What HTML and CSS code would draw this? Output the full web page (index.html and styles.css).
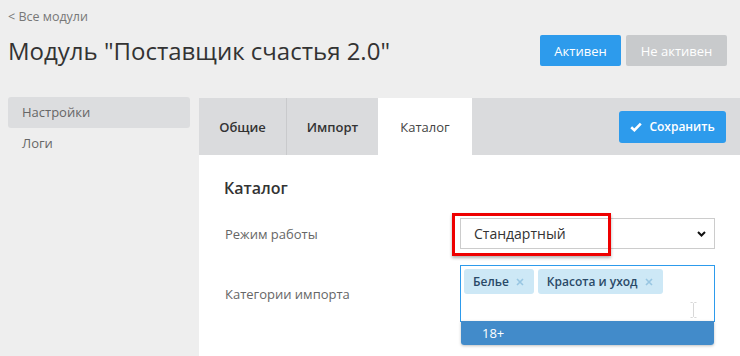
FILE: index.html
```html
<!DOCTYPE html>
<html lang="ru">
<head>
<meta charset="utf-8">
<title>Модуль</title>
<link rel="stylesheet" href="styles.css">
</head>
<body>
<div class="page">
  <div class="top">
    <a class="back" href="#">&lt; Все модули</a>
    <div class="title-row">
      <h1 class="title">Модуль "Поставщик счастья 2.0"</h1>
      <div class="status">
        <button class="btn btn-active">Активен</button>
        <button class="btn btn-inactive">Не активен</button>
      </div>
    </div>
  </div>
  <div class="body-row">
    <nav class="sidebar">
      <a class="side-item side-item-active" href="#">Настройки</a>
      <a class="side-item" href="#">Логи</a>
    </nav>
    <main class="panel">
      <div class="tabbar">
        <div class="tabs">
          <div class="tab tab-sep">Общие</div>
          <div class="tab">Импорт</div>
          <div class="tab tab-current">Каталог</div>
        </div>
        <button class="btn-save">
          <svg class="check" width="12" height="10" viewBox="0 0 12 10"><path d="M1.2 5.2 L4.4 8.2 L10.8 1.6" fill="none" stroke="#fff" stroke-width="2.6" stroke-linejoin="miter"/></svg>
          Сохранить
        </button>
      </div>
      <div class="content">
        <h2 class="section-title">Каталог</h2>
        <div class="form-row row-mode">
          <label class="label">Режим работы</label>
          <div class="field">
            <div class="select">
              <span>Стандартный</span>
              <svg class="chev" width="9" height="6" viewBox="0 0 9 6"><path d="M1 1 L4.5 4.5 L8 1" fill="none" stroke="#111" stroke-width="2"/></svg>
            </div>
            <div class="highlight"></div>
          </div>
        </div>
        <div class="form-row row-cats">
          <label class="label">Категории импорта</label>
          <div class="field">
            <div class="multi">
              <span class="tag">Белье <svg class="x" width="8" height="8" viewBox="0 0 8 8"><path d="M1 1 L7 7 M7 1 L1 7" stroke="#98c6e2" stroke-width="1.6"/></svg></span>
              <span class="tag">Красота и уход <svg class="x" width="8" height="8" viewBox="0 0 8 8"><path d="M1 1 L7 7 M7 1 L1 7" stroke="#98c6e2" stroke-width="1.6"/></svg></span>
              <svg class="ibeam" width="7" height="16" viewBox="0 0 7 16"><path d="M0.5 0.5 H2.5 L3.5 1.5 L4.5 0.5 H6.5 M3.5 1.5 V14.5 M0.5 15.5 H2.5 L3.5 14.5 L4.5 15.5 H6.5" fill="none" stroke="#d8d8d8" stroke-width="1"/></svg>
            </div>
            <div class="dropdown">
              <div class="option option-hl">18+</div>
            </div>
          </div>
        </div>
      </div>
    </main>
  </div>
</div>
</body>
</html>
```

FILE: styles.css
```css
* { box-sizing: border-box; }
html, body { margin: 0; padding: 0; }
body {
  background: #eeeeee;
  font-family: "Open Sans", "Liberation Sans", sans-serif;
  color: #333;
  width: 740px;
  height: 356px;
  overflow: hidden;
}
.page { padding: 8px 0 0 8px; }
.top { padding-right: 13px; }
.back {
  display: block;
  font-size: 12.5px;
  line-height: 18px;
  color: #777;
  text-decoration: none;
}
.title-row {
  margin-top: 9px;
  display: flex;
  align-items: center;
  justify-content: space-between;
  height: 31px;
}
.title {
  margin: 0;
  font-size: 24px;
  font-weight: 400;
  line-height: 31px;
  color: #333;
}
.status { display: flex; gap: 5px; }
.btn {
  height: 31px;
  border: 0;
  border-radius: 2px;
  font-family: inherit;
  font-size: 13px;
  color: #fff;
  padding: 0;
  white-space: nowrap;
}
.btn-active { background: #2d9bec; width: 81px; }
.btn-inactive { background: #c8cacc; width: 101px; }

.body-row {
  display: flex;
  margin-top: 31px;
  gap: 9px;
}
.sidebar {
  width: 182px;
  flex: none;
  display: flex;
  flex-direction: column;
}
.side-item {
  display: block;
  height: 31px;
  line-height: 31px;
  padding-left: 14px;
  font-size: 13px;
  color: #666;
  text-decoration: none;
  border-radius: 3px;
}
.side-item-active { background: #dcdddf; }

.panel {
  flex: 1;
  margin-top: 1px;
  background: #fff;
  min-height: 260px;
}
.tabbar {
  height: 57px;
  background: #dadbdd;
  display: flex;
  align-items: center;
  justify-content: space-between;
  padding-right: 14px;
}
.tabs { display: flex; height: 100%; }
.tab {
  height: 100%;
  display: flex;
  align-items: center;
  justify-content: center;
  font-size: 13px;
  font-weight: 600;
  color: #333;
}
.tabs .tab:nth-child(1) { width: 88px; }
.tabs .tab:nth-child(2) { width: 91px; }
.tab-sep { border-right: 1px solid #c9cacc; }
.tab-current {
  width: 94px;
  background: #fff;
  font-weight: 400;
  color: #444;
}
.btn-save {
  height: 32px;
  width: 107px;
  border: 0;
  border-radius: 3px;
  background: #2d9bec;
  color: #fff;
  font-family: inherit;
  font-size: 12px;
  font-weight: 600;
  display: flex;
  align-items: center;
  justify-content: center;
  gap: 7px;
  padding: 0;
}
.check { display: block; }

.content { padding: 22px 25px 0 26px; }
.section-title {
  margin: 0;
  margin-left: -1px;
  font-size: 16px;
  font-weight: 600;
  line-height: 22px;
  color: #333;
}
.form-row {
  display: flex;
  align-items: center;
}
.row-mode { margin-top: 19px; }
.row-cats { margin-top: 16px; }
.label {
  width: 235px;
  flex: none;
  font-size: 13px;
  color: #666;
}
.field { flex: 1; position: relative; }
.select {
  height: 31px;
  border: 1px solid #ccc;
  display: flex;
  align-items: center;
  justify-content: space-between;
  padding: 0 8px 0 13px;
  font-size: 14px;
  color: #333;
}
.chev { display: block; }
.highlight {
  position: absolute;
  left: -8px;
  top: -5px;
  width: 159px;
  height: 43px;
  border: 3px solid #ee0000;
  box-shadow: 0 2px 3px rgba(0, 0, 0, 0.3);
  pointer-events: none;
}
.multi {
  height: 57px;
  border: 1px solid #2d9bec;
  padding: 3px;
  display: flex;
  align-items: flex-start;
  gap: 4px;
  position: relative;
}
.tag {
  height: 25px;
  background: #cde8f6;
  border-radius: 3px;
  padding: 0 10px 0 9px;
  font-size: 12px;
  font-weight: 600;
  color: #2a4a68;
  display: flex;
  align-items: center;
  gap: 7px;
}
.x { display: block; }
.ibeam {
  position: absolute;
  left: 229px;
  top: 36px;
}
.dropdown {
  position: absolute;
  left: 1px;
  right: 1px;
  top: 56px;
  box-shadow: 0 1px 3px rgba(0, 0, 0, 0.25);
  border-radius: 0 0 3px 3px;
  overflow: hidden;
}
.option {
  height: 24px;
  line-height: 24px;
  padding-left: 21px;
  font-size: 13px;
}
.option-hl { background: #428bca; color: #fff; }
```
